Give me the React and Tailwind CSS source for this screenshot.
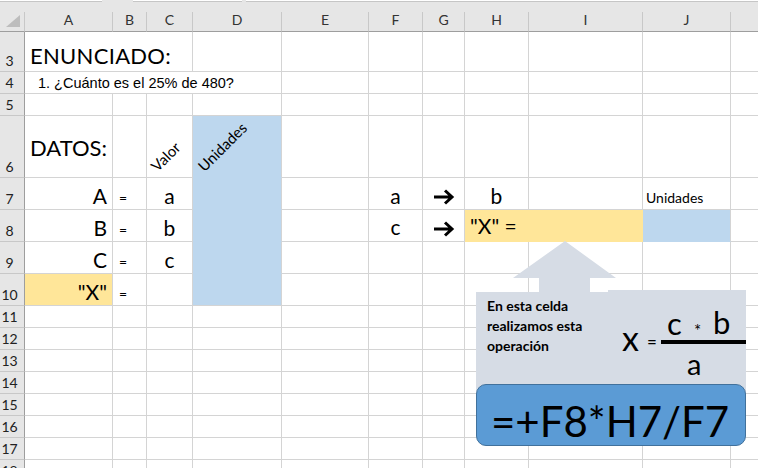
const cell = "border-r border-b border-[#d4d4d4] flex items-end whitespace-nowrap min-w-0 relative leading-none";
const rowHead = "bg-[#e6e6e6] border-r border-r-[#9e9e9e] border-b border-b-[#c8c8c8] flex items-end justify-center pr-[5px] pb-[3px] text-[14px] text-[#222] leading-none";
const blue = "bg-[#bdd7ee] border-b-[#bdd7ee]";

function Arrow() {
  return (
    <svg width="22" height="16" viewBox="0 0 22 16">
      <path d="M1 8 H19 M12 1.5 L19 8 L12 14.5" fill="none" stroke="#000" strokeWidth="3" />
    </svg>
  );
}

function Blank({ n }) {
  return Array.from({ length: n }).map((_, i) => <div key={i} className={cell} />);
}

export default function App() {
  const heads = ["A", "B", "C", "D", "E", "F", "G", "H", "I", "J", ""];
  return (
    <div className="relative w-[758px] h-[468px] overflow-hidden bg-white font-['Lato',sans-serif] text-black">
      {/* top strip */}
      <div className="h-[12px] bg-[#e6e6e6] flex items-start">
        <div className="w-[102px] h-[2px] bg-white border-b border-[#c6c6c6]" />
        <div className="w-[31px]" />
        <div className="w-[109px] h-[2px] bg-white border-b border-[#c6c6c6]" />
        <div className="w-[4px]" />
        <div className="flex-1 h-[2px] bg-white border-b border-[#c6c6c6]" />
      </div>

      <div className="grid grid-cols-[25px_88px_34px_46px_89px_87px_54px_42px_64px_114px_88px_40px] grid-rows-[20px_40px_22px_22px_62px_32px_32px_32px_32px_22px_22px_22px_22px_22px_22px_22px_22px]">
        {/* header row */}
        <div className="bg-[#e6e6e6] border-r border-[#c8c8c8] border-b border-b-[#9e9e9e] flex items-end justify-end pr-[4px] pb-[4px]">
          <svg width="14" height="12" viewBox="0 0 14 12"><polygon points="0,12 14,0 14,12" fill="#bdbdbd" /></svg>
        </div>
        {heads.map((h, i) => (
          <div key={i} className="bg-[#e6e6e6] border-r border-[#c8c8c8] border-b border-b-[#9e9e9e] flex items-end justify-center pb-[4px] text-[14px] text-[#333] leading-none">{h}</div>
        ))}

        {/* row 3 */}
        <div className={rowHead}>3</div>
        <div className={`${cell} col-span-3 pl-[5px] pb-[4px] text-[22px] tracking-[0.3px]`}>ENUNCIADO:</div>
        <Blank n={8} />

        {/* row 4 */}
        <div className={rowHead}>4</div>
        <div className={`${cell} col-span-4 pl-[13px] pb-[3px] text-[14.5px] font-['Liberation_Sans',sans-serif]`}>1. ¿Cuánto es el 25% de 480?</div>
        <Blank n={7} />

        {/* row 5 */}
        <div className={rowHead}>5</div>
        <Blank n={11} />

        {/* row 6 */}
        <div className={rowHead}>6</div>
        <div className={`${cell} pl-[5px] pb-[18px] text-[22px]`}>DATOS:</div>
        <div className={cell} />
        <div className={cell}>
          <span className="absolute left-[12px] bottom-[3px] origin-bottom-left -rotate-45 text-[15px]">Valor</span>
        </div>
        <div className={`${cell} ${blue}`}>
          <span className="absolute left-[13px] bottom-[3px] origin-bottom-left -rotate-45 text-[15px]">Unidades</span>
        </div>
        <Blank n={7} />

        {/* row 7 */}
        <div className={rowHead}>7</div>
        <div className={`${cell} justify-end pr-[5px] pb-[3px] text-[21px]`}>A</div>
        <div className={`${cell} pl-[6px] pb-[4px] text-[14px]`}>=</div>
        <div className={`${cell} justify-center pb-[3px] text-[21px]`}>a</div>
        <div className={`${cell} ${blue}`} />
        <div className={cell} />
        <div className={`${cell} justify-center pb-[3px] text-[21px]`}>a</div>
        <div className={`${cell} justify-center pb-[4px]`}><Arrow /></div>
        <div className={`${cell} justify-center pb-[3px] text-[21px]`}>b</div>
        <div className={cell} />
        <div className={`${cell} pl-[3px] pb-[4px] text-[14px]`}>Unidades</div>
        <div className={cell} />

        {/* row 8 */}
        <div className={rowHead}>8</div>
        <div className={`${cell} justify-end pr-[5px] pb-[3px] text-[21px]`}>B</div>
        <div className={`${cell} pl-[6px] pb-[4px] text-[14px]`}>=</div>
        <div className={`${cell} justify-center pb-[3px] text-[21px]`}>b</div>
        <div className={`${cell} ${blue}`} />
        <div className={cell} />
        <div className={`${cell} justify-center pb-[4px] text-[21px]`}>c</div>
        <div className={`${cell} justify-center pb-[4px]`}><Arrow /></div>
        <div className={`${cell} col-span-2 bg-[#ffe699] border-r-[#ffe699] border-b-[#ffe699] pl-[5px] pb-[5px] text-[21px]`}>"X" =</div>
        <div className={`${cell} bg-[#bdd7ee] border-b-[#bdd7ee]`} />
        <div className={cell} />

        {/* row 9 */}
        <div className={rowHead}>9</div>
        <div className={`${cell} justify-end pr-[5px] pb-[3px] text-[21px]`}>C</div>
        <div className={`${cell} pl-[6px] pb-[4px] text-[14px]`}>=</div>
        <div className={`${cell} justify-center pb-[3px] text-[21px]`}>c</div>
        <div className={`${cell} ${blue}`} />
        <Blank n={7} />

        {/* row 10 */}
        <div className={rowHead}>10</div>
        <div className={`${cell} bg-[#ffe699] justify-end pr-[5px] pb-[3px] text-[21px]`}>"X"</div>
        <div className={`${cell} pl-[6px] pb-[4px] text-[14px]`}>=</div>
        <div className={cell} />
        <div className={`${cell} bg-[#bdd7ee]`} />
        <Blank n={7} />

        {[11, 12, 13, 14, 15, 16, 17, 18].map((r) => (
          <div key={r} className="contents">
            <div className={rowHead}>{r}</div>
            <Blank n={11} />
          </div>
        ))}
      </div>

      {/* callout shape */}
      <svg className="absolute left-0 top-0 pointer-events-none" width="758" height="468">
        <polygon
          points="476,292 539,292 539,278 513,278 565,241 616,278 590,278 590,292 608,292 608,290 746,290 746,420 476,420"
          fill="#d6dce5"
        />
      </svg>

      <div className="absolute left-[487px] top-[296px] text-[14px] leading-[20px] font-bold">
        <div>En esta celda</div>
        <div>realizamos esta</div>
        <div>operación</div>
      </div>

      <span className="absolute left-[622px] top-[321px] text-[34px] leading-none">x</span>
      <span className="absolute left-[647px] top-[333px] text-[17px] leading-none">=</span>
      <span className="absolute left-[667px] top-[308px] text-[31px] leading-none">c</span>
      <span className="absolute left-[694px] top-[322px] text-[17px] leading-none">*</span>
      <span className="absolute left-[713px] top-[307px] text-[31px] leading-none">b</span>
      <span className="absolute left-[687px] top-[349px] text-[29px] leading-none">a</span>
      <div className="absolute left-[661px] top-[340px] w-[85px] h-[4px] bg-black" />

      <div className="absolute left-[476px] top-[384px] w-[270px] h-[62px] rounded-[10px] bg-[#5b9bd5] border border-[#41719c] pl-[14px] pt-[15px]">
        <span className="block text-[42px] leading-none">=+F8*H7/F7</span>
      </div>
    </div>
  );
}
